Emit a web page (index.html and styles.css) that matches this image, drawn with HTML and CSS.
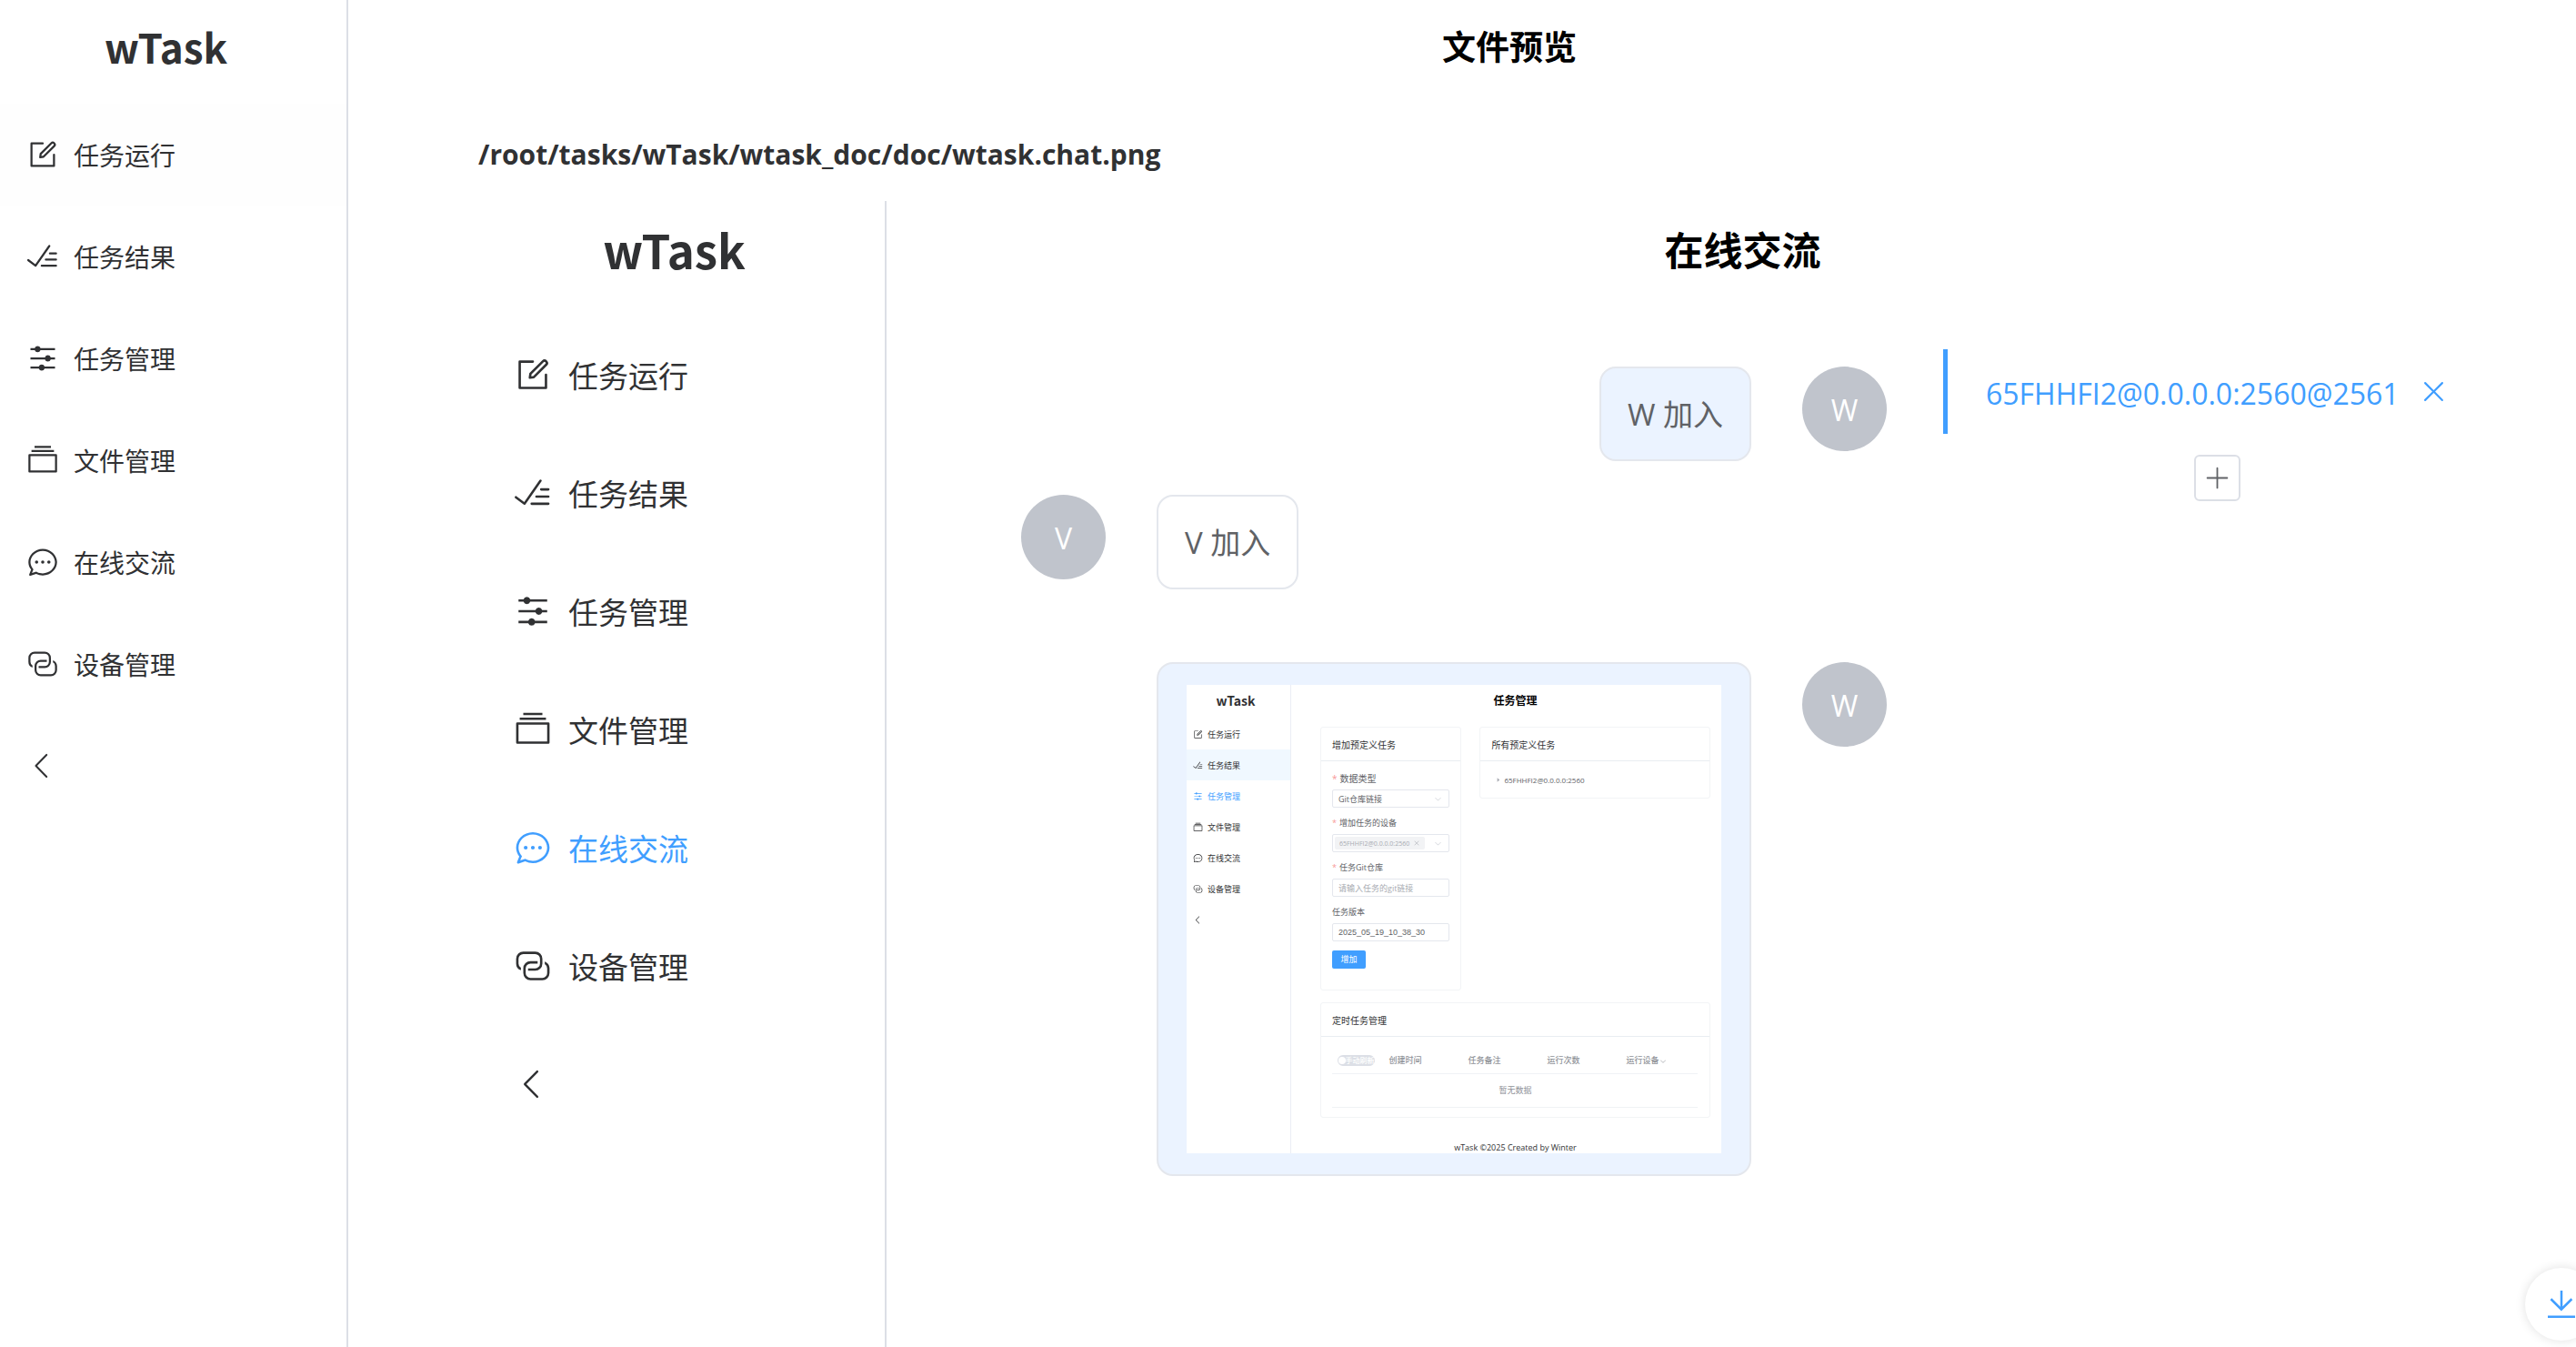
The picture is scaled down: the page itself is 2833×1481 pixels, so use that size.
FILE: index.html
```html
<!DOCTYPE html>
<html lang="zh-CN">
<head>
<meta charset="utf-8">
<meta name="viewport" content="width=device-width, initial-scale=1">
<title>wTask 文件预览</title>
<link rel="stylesheet" href="styles.css">
</head>
<body>
<svg class="sprite" aria-hidden="true">
  <symbol id="i-edit" viewBox="0 0 1024 1024"><path d="M832 512a32 32 0 1 1 64 0v352a32 32 0 0 1-32 32H160a32 32 0 0 1-32-32V160a32 32 0 0 1 32-32h352a32 32 0 0 1 0 64H192v640h640z"/><path d="m469.952 554.24 52.8-7.552L847.104 222.4a32 32 0 1 0-45.248-45.248L477.44 501.44l-7.552 52.8zm422.4-422.4a96 96 0 0 1 0 135.808l-331.84 331.84a32 32 0 0 1-18.112 9.088L436.8 623.68a32 32 0 0 1-36.224-36.224l15.104-105.6a32 32 0 0 1 9.024-18.112l331.904-331.84a96 96 0 0 1 135.744 0z"/></symbol>
  <symbol id="i-finished" viewBox="0 0 1024 1024"><path d="M280.768 753.728 691.456 167.04a32 32 0 1 1 52.416 36.672L314.24 817.472a32 32 0 0 1-45.44 7.296l-230.4-172.8a32 32 0 0 1 38.4-51.2l203.968 152.96zM736 448a32 32 0 1 1 0-64h192a32 32 0 1 1 0 64zM608 640a32 32 0 0 1 0-64h319.936a32 32 0 1 1 0 64zM480 832a32 32 0 1 1 0-64h447.936a32 32 0 1 1 0 64z"/></symbol>
  <symbol id="i-operation" viewBox="0 0 1024 1024"><path d="M389.44 768a96.064 96.064 0 0 1 181.12 0H896v64H570.56a96.064 96.064 0 0 1-181.12 0H128v-64zm192-288a96.064 96.064 0 0 1 181.12 0H896v64H762.56a96.064 96.064 0 0 1-181.12 0H128v-64zm-320-288a96.064 96.064 0 0 1 181.12 0H896v64H442.56a96.064 96.064 0 0 1-181.12 0H128v-64z"/></symbol>
  <symbol id="i-files" viewBox="0 0 1024 1024"><path d="M128 384v448h768V384zm-32-64h832a32 32 0 0 1 32 32v512a32 32 0 0 1-32 32H96a32 32 0 0 1-32-32V352a32 32 0 0 1 32-32zm64-128h704v64H160zm96-128h512v64H256z"/></symbol>
  <symbol id="i-chat" viewBox="0 0 1024 1024"><path d="m174.72 855.68 135.296-45.12 23.68 11.84C388.096 849.536 448.576 864 512 864c211.84 0 384-166.784 384-352S723.84 160 512 160 128 326.784 128 512c0 69.12 24.96 139.264 70.848 199.232l22.08 28.8-46.272 115.584zm-45.248 82.56A32 32 0 0 1 89.6 896l58.368-145.92C94.72 680.32 64 596.864 64 512 64 299.904 256 96 512 96s448 203.904 448 416-192 416-448 416a461.056 461.056 0 0 1-206.912-48.384l-175.616 58.56z"/><path d="M512 563.2a51.2 51.2 0 1 1 0-102.4 51.2 51.2 0 0 1 0 102.4m192 0a51.2 51.2 0 1 1 0-102.4 51.2 51.2 0 0 1 0 102.4m-384 0a51.2 51.2 0 1 1 0-102.4 51.2 51.2 0 0 1 0 102.4"/></symbol>
  <symbol id="i-connection" viewBox="0 0 1024 1024"><path d="M640 384v64H448a128 128 0 0 0-128 128v128a128 128 0 0 0 128 128h320a128 128 0 0 0 128-128V576a128 128 0 0 0-64-110.848V394.88c74.56 26.368 128 97.472 128 181.056v128a192 192 0 0 1-192 192H448a192 192 0 0 1-192-192V576a192 192 0 0 1 192-192z"/><path d="M384 640v-64h192a128 128 0 0 0 128-128V320a128 128 0 0 0-128-128H256a128 128 0 0 0-128 128v128a128 128 0 0 0 64 110.848v70.272A192.064 192.064 0 0 1 64 448V320a192 192 0 0 1 192-192h320a192 192 0 0 1 192 192v128a192 192 0 0 1-192 192z"/></symbol>
  <symbol id="i-left" viewBox="0 0 1024 1024"><path d="M609.408 149.376 277.76 489.6a32 32 0 0 0 0 44.672l331.648 340.352a29.12 29.12 0 0 0 41.728 0 30.592 30.592 0 0 0 0-42.752L339.264 511.936l311.872-319.872a30.592 30.592 0 0 0 0-42.688 29.12 29.12 0 0 0-41.728 0z"/></symbol>
  <symbol id="i-down" viewBox="0 0 1024 1024"><path d="M831.872 340.864 512 652.672 192.128 340.864a30.592 30.592 0 0 0-42.752 0 29.12 29.12 0 0 0 0 41.6L489.664 714.24a32 32 0 0 0 44.672 0l340.288-331.712a29.12 29.12 0 0 0 0-41.728 30.592 30.592 0 0 0-42.752 0z"/></symbol>
  <symbol id="i-close" viewBox="0 0 1024 1024"><path d="M764.288 214.592 512 466.88 259.712 214.592a31.936 31.936 0 0 0-45.12 45.12L466.752 512 214.528 764.224a31.936 31.936 0 1 0 45.12 45.184L512 557.184l252.288 252.288a31.936 31.936 0 0 0 45.12-45.12L557.12 512.064l252.288-252.352a31.936 31.936 0 1 0-45.12-45.184z"/></symbol>
  <symbol id="i-plus" viewBox="0 0 1024 1024"><path d="M480 480V128a32 32 0 0 1 64 0v352h352a32 32 0 1 1 0 64H544v352a32 32 0 1 1-64 0V544H128a32 32 0 0 1 0-64z"/></symbol>
  <symbol id="i-download" viewBox="0 0 1024 1024"><path d="M128 832h768v64H128zm416-253.696 236.288-236.352 45.248 45.248L508.8 704 192 387.2l45.248-45.248L480 584.704V128h64z"/></symbol>
  <symbol id="i-caret" viewBox="0 0 1024 1024"><path d="M384 192v640l384-320.064z"/></symbol>
</svg>

<div class="app">
  <aside class="sidebar">
    <h1 class="brand">wTask</h1>
    <nav class="menu">
      <a class="item hover" href="#run"><svg class="icon"><use href="#i-edit"/></svg><span>任务运行</span></a>
      <a class="item" href="#result"><svg class="icon"><use href="#i-finished"/></svg><span>任务结果</span></a>
      <a class="item" href="#task"><svg class="icon"><use href="#i-operation"/></svg><span>任务管理</span></a>
      <a class="item" href="#file"><svg class="icon"><use href="#i-files"/></svg><span>文件管理</span></a>
      <a class="item" href="#chat"><svg class="icon"><use href="#i-chat"/></svg><span>在线交流</span></a>
      <a class="item" href="#device"><svg class="icon"><use href="#i-connection"/></svg><span>设备管理</span></a>
      <button class="item" type="button" aria-label="收起"><svg class="icon"><use href="#i-left"/></svg></button>
    </nav>
  </aside>

  <main class="main">
    <h2 class="page-title">文件预览</h2>
    <h3 class="path">/root/tasks/wTask/wtask_doc/doc/wtask.chat.png</h3>

    <section class="preview">
      <aside class="sidebar p-sidebar">
        <h1 class="brand">wTask</h1>
        <nav class="menu">
          <a class="item" href="#run"><svg class="icon"><use href="#i-edit"/></svg><span>任务运行</span></a>
          <a class="item" href="#result"><svg class="icon"><use href="#i-finished"/></svg><span>任务结果</span></a>
          <a class="item" href="#task"><svg class="icon"><use href="#i-operation"/></svg><span>任务管理</span></a>
          <a class="item" href="#file"><svg class="icon"><use href="#i-files"/></svg><span>文件管理</span></a>
          <a class="item active" href="#chat"><svg class="icon"><use href="#i-chat"/></svg><span>在线交流</span></a>
          <a class="item" href="#device"><svg class="icon"><use href="#i-connection"/></svg><span>设备管理</span></a>
          <button class="item" type="button" aria-label="收起"><svg class="icon"><use href="#i-left"/></svg></button>
        </nav>
      </aside>

      <div class="p-main">
        <h2 class="p-title">在线交流</h2>
        <div class="p-body">
          <div class="chat">
            <div class="row mine"><div class="bubble">W 加入</div><span class="avatar">W</span></div>
            <div class="row"><span class="avatar">V</span><div class="bubble">V 加入</div></div>
            <div class="row mine wide">
              <div class="bubble shot">
                <div class="thumb">
                  <aside class="sidebar t-sidebar">
                    <h1 class="brand">wTask</h1>
                    <nav class="menu">
                      <a class="item" href="#run"><svg class="icon"><use href="#i-edit"/></svg><span>任务运行</span></a>
                      <a class="item hover" href="#result"><svg class="icon"><use href="#i-finished"/></svg><span>任务结果</span></a>
                      <a class="item active" href="#task"><svg class="icon"><use href="#i-operation"/></svg><span>任务管理</span></a>
                      <a class="item" href="#file"><svg class="icon"><use href="#i-files"/></svg><span>文件管理</span></a>
                      <a class="item" href="#chat"><svg class="icon"><use href="#i-chat"/></svg><span>在线交流</span></a>
                      <a class="item" href="#device"><svg class="icon"><use href="#i-connection"/></svg><span>设备管理</span></a>
                      <button class="item" type="button" aria-label="收起"><svg class="icon"><use href="#i-left"/></svg></button>
                    </nav>
                  </aside>
                  <div class="t-main">
                    <h2 class="t-title">任务管理</h2>
                    <div class="cards">
                      <section class="card">
                        <h3 class="card-head">增加预定义任务</h3>
                        <form class="form">
                          <label class="label big" for="type"><i>*</i>数据类型</label>
                          <div class="field"><select id="type"><option>Git仓库链接</option></select><svg class="chev"><use href="#i-down"/></svg></div>
                          <div class="label"><i>*</i>增加任务的设备</div>
                          <div class="field"><span class="tag">65FHHFI2@0.0.0.0:2560<svg><use href="#i-close"/></svg></span><svg class="chev"><use href="#i-down"/></svg></div>
                          <label class="label" for="git"><i>*</i>任务Git仓库</label>
                          <div class="field"><input id="git" type="text" placeholder="请输入任务的git链接"></div>
                          <label class="label" for="ver">任务版本</label>
                          <div class="field"><input id="ver" class="ver" type="text" value="2025_05_19_10_38_30"></div>
                          <button class="add" type="button">增加</button>
                        </form>
                      </section>
                      <section class="card tree">
                        <h3 class="card-head">所有预定义任务</h3>
                        <p class="node"><svg><use href="#i-caret"/></svg>65FHHFI2@0.0.0.0:2560</p>
                      </section>
                      <section class="card full">
                        <h3 class="card-head">定时任务管理</h3>
                        <table class="table">
                          <thead><tr>
                            <th class="sw"><span class="switch">手动刷新</span></th>
                            <th class="col">创建时间</th><th class="col">任务备注</th><th class="col">运行次数</th><th>运行设备<svg><use href="#i-down"/></svg></th>
                          </tr></thead>
                          <tbody><tr><td colspan="5">暂无数据</td></tr></tbody>
                        </table>
                      </section>
                    </div>
                    <footer class="foot">wTask ©2025 Created by Winter</footer>
                  </div>
                </div>
              </div>
              <span class="avatar">W</span>
            </div>
          </div>

          <div class="tabs">
            <div class="tab"><span>65FHHFI2@0.0.0.0:2560@2561</span><button class="close" type="button" aria-label="关闭"><svg><use href="#i-close"/></svg></button></div>
            <button class="plus" type="button" aria-label="添加"><svg><use href="#i-plus"/></svg></button>
          </div>
        </div>
      </div>
    </section>
  </main>
</div>
<button class="download" type="button" aria-label="下载"><svg><use href="#i-download"/></svg></button>
</body>
</html>
```
FILE: styles.css
```css
* { box-sizing: border-box; }

html, body { margin: 0; }

body {
  font-family: "Open Sans", "Noto Sans CJK SC", sans-serif;
  color: #303133;
  background: #fff;
  overflow: hidden;
}

h1, h2, h3, p { margin: 0; }
button { font: inherit; color: inherit; background: none; border: 0; padding: 0; }
svg { fill: currentColor; flex: none; }
.sprite { position: absolute; width: 0; height: 0; }

.app { display: flex; min-height: 100vh; }

/* Sidebar, shared by the page and both nested screens */
.sidebar {
  flex: none;
  width: 383px;
  border-right: 2px solid #dcdfe6;
  font-family: "Noto Sans CJK SC", sans-serif;
}
.brand {
  height: 114px;
  padding-right: 16px;
  font-size: 44px;
  line-height: 102px;
  text-align: center;
}
.menu { display: flex; flex-direction: column; }
.item {
  display: flex;
  align-items: center;
  gap: 16px;
  height: 112px;
  padding-left: 29px;
  font-size: 28px;
  color: #303133;
  text-decoration: none;
}
.icon { width: 36px; height: 36px; }
.item.hover { background: #fefefe; }
.item.active { color: #409eff; }

.main { flex: 1; min-width: 0; display: flex; flex-direction: column; }
.page-title {
  padding-left: 104px;
  font-size: 37px;
  line-height: 104px;
  color: #000;
  text-align: center;
}
.path {
  padding: 41px 0 26px 143px;
  font-size: 30px;
  line-height: 50px;
}

/* Previewed chat screen */
.preview { flex: 1; display: flex; margin: 0 39px 0 143px; }
.p-sidebar { width: 449px; }
.p-sidebar .brand { height: 126px; font-size: 51px; line-height: 106px; }
.p-sidebar .item { height: 130px; padding-left: 39px; gap: 18px; font-size: 33px; }
.p-sidebar .icon { width: 42px; height: 42px; }

.p-main { flex: 1; min-width: 0; }
.p-title {
  padding-left: 64px;
  font-size: 43px;
  line-height: 110px;
  color: #000;
  text-align: center;
}
.p-body {
  display: grid;
  grid-template-columns: 952fr 603fr;
  gap: 62px;
  padding: 53px 54px 0 148px;
}
.chat { padding-top: 19px; }
.row { display: flex; gap: 56px; margin-bottom: 37px; }
.row.mine { justify-content: flex-end; }
.row.wide { margin-top: 80px; }
.avatar {
  flex: none;
  width: 93px;
  height: 93px;
  border-radius: 50%;
  background: #c0c4cc;
  color: #fff;
  font-size: 32px;
  line-height: 95px;
  text-align: center;
}
.bubble {
  height: 104px;
  padding: 0 29px;
  border: 2px solid #e4e7ed;
  border-radius: 18px;
  color: #606266;
  font-size: 33px;
  line-height: 102px;
  white-space: nowrap;
}
.mine .bubble { background: #ebf3ff; }
.bubble.shot { height: auto; width: 654px; padding: 23px 31px; line-height: normal; white-space: normal; }

.tab {
  display: flex;
  align-items: center;
  gap: 20px;
  height: 93px;
  padding-left: 42px;
  border-left: 5px solid #409eff;
  color: #409eff;
  font-size: 32px;
  font-weight: 500;
}
.tab span { padding-top: 4px; }
.close svg { display: block; width: 35px; height: 35px; }
.plus {
  display: flex;
  align-items: center;
  justify-content: center;
  width: 51px;
  height: 51px;
  margin: 23px auto 0;
  border: 2px solid #dcdfe6;
  border-radius: 6px;
  color: #606266;
}
.plus svg { width: 29px; height: 29px; }

/* Screenshot shared in the chat */
.thumb { display: flex; height: 515px; background: #fff; color: #303133; font-size: 9px; }
.t-sidebar { width: 115px; border-right: 1px solid #ebeef5; }
.t-sidebar .brand { height: 37px; padding-right: 6px; font-size: 14px; line-height: 35px; }
.t-sidebar .item { height: 34px; padding-left: 7px; gap: 5px; font-size: 9px; }
.t-sidebar .icon { width: 11px; height: 11px; }
.t-sidebar .item.hover { background: #f0f8ff; }

.t-main { flex: 1; min-width: 0; padding: 0 12px 0 32px; }
.t-title { height: 46px; font-size: 12px; line-height: 36px; color: #000; text-align: center; }
.cards { display: grid; grid-template-columns: 155fr 253fr; gap: 13px 20px; align-items: start; }
.card { border: 1px solid #f2f4f6; border-radius: 3px; }
.card.full { grid-column: 1 / -1; height: 127px; }
.card-head { height: 37px; padding-left: 12px; border-bottom: 1px solid #e9edf1; font-size: 10px; font-weight: 400; line-height: 38px; }
.form { height: 251px; padding: 9px 12px 0; }
.label { display: block; height: 22px; line-height: 20px; color: #606266; }
.label.big { font-size: 10px; }
.label i { margin-right: 3px; color: #f89898; font-style: normal; }
.field {
  position: relative;
  display: flex;
  align-items: center;
  height: 20px;
  margin-bottom: 7px;
  border: 1px solid #e4e7ed;
  border-radius: 2px;
}
.field select, .field input {
  width: 100%;
  height: 18px;
  padding: 0 6px;
  border: 0;
  background: none;
  appearance: none;
  color: #606266;
  font: inherit;
}
.field .ver { font-family: "Liberation Sans", sans-serif; }
.field input::placeholder { color: #a8abb2; }
.chev { position: absolute; right: 7px; width: 9px; height: 9px; color: #c0c4cc; }
.tag {
  display: flex;
  align-items: center;
  gap: 4px;
  height: 14px;
  margin-left: 2px;
  padding: 0 5px;
  border-radius: 2px;
  background: #f2f3f5;
  color: #a8abb2;
  font-size: 7px;
}
.tag svg { width: 8px; height: 8px; }
.add { width: 37px; height: 20px; margin-top: 3px; border-radius: 2px; background: #409eff; color: #fff; line-height: 20px; }
.node { display: flex; align-items: center; gap: 3px; height: 40px; padding-left: 16px; color: #606266; font-size: 8px; }
.node svg { width: 7px; height: 7px; color: #a8abb2; }
.table { width: 402px; margin: 12px auto 0; border-collapse: collapse; table-layout: fixed; color: #909399; }
.table th { height: 28px; padding: 0; font-weight: 500; text-align: left; }
.table th.sw { width: 62px; padding-left: 6px; }
.table th.col { width: 87px; }
.table th svg { width: 8px; height: 8px; vertical-align: middle; }
.table tr { border-bottom: 1px solid #f0f2f5; }
.table td { height: 37px; padding: 0; text-align: center; }
.switch {
  display: block;
  width: 41px;
  height: 12px;
  border: 1px solid #dcdfe6;
  border-left-width: 8px;
  border-radius: 6px;
  background: #dcdfe6;
  color: #fff;
  font-size: 8px;
  line-height: 10px;
  position: relative;
}
.switch::before {
  content: "";
  position: absolute;
  left: -7px;
  top: 1px;
  width: 8px;
  height: 8px;
  border-radius: 50%;
  background: #fff;
}
.foot { padding-top: 25px; font-size: 9px; line-height: 16px; text-align: center; }

.download {
  position: fixed;
  right: -24px;
  bottom: 7px;
  display: flex;
  align-items: center;
  justify-content: center;
  width: 80px;
  height: 80px;
  border-radius: 50%;
  background: #fff;
  box-shadow: 0 0 12px rgba(0, 0, 0, 0.12);
  color: #409eff;
}
.download svg { width: 40px; height: 40px; }
```
